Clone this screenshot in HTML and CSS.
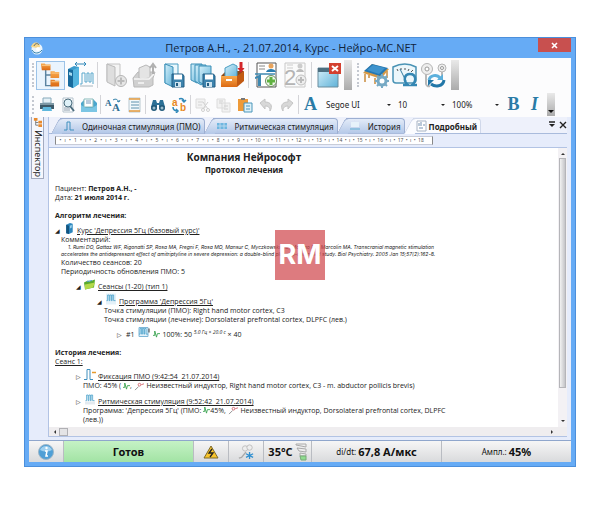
FILE: index.html
```html
<!DOCTYPE html>
<html lang="ru">
<head>
  <meta charset="UTF-8" />
  <meta name="viewport" content="width=device-width, initial-scale=1.0"/>
  <title>Нейро-МС.NET</title>
  <link rel="stylesheet" href="styles.css">
</head>
<body>

  <!-- shared symbols -->
  <svg class="defs" aria-hidden="true">
    <defs>
      <linearGradient id="blueBox" x1="0" x2="1" y1="0" y2="1">
        <stop offset="0" stop-color="#d6f0fa"/><stop offset="1" stop-color="#5fb2d8"/>
      </linearGradient>
      <linearGradient id="orangeBox" x1="0" x2="0" y1="0" y2="1">
        <stop offset="0" stop-color="#f9a94b"/><stop offset="1" stop-color="#dc6a14"/>
      </linearGradient>
    </defs>
    <symbol id="floppy" viewBox="0 0 14 15">
      <path d="M1 1h10.500l1.500 2v11H1z" fill="#3d83ad" stroke="#235d83"/>
      <path d="M3 1.500h8v5H3z" fill="#fff"/>
      <path d="M4 9h6v5H4z" fill="#cfe4ef"/>
      <path d="M5 10h2v3H5z" fill="#235d83"/>
    </symbol>
    <symbol id="pulses" viewBox="0 0 12 12">
      <path d="M0 9.500h1.500V2h2v7.500h1V2h2v7.500h1V2h2v7.500H12" fill="none" stroke="#3f9cc8"/>
    </symbol>
    <symbol id="zig" viewBox="0 0 8 10">
      <path d="M0 6h2V1l2 7 1-4h3" fill="none" stroke="#35a04c"/>
    </symbol>
    <symbol id="coil" viewBox="0 0 12 10">
      <path d="M1 9l4-4" stroke="#888"/>
      <circle cx="6" cy="3" r="1.500" fill="none" stroke="#d2636b"/>
      <path d="M8 3l3-1" stroke="#d2636b"/>
    </symbol>
  </svg>

  <main class="window">
    <header class="titlebar">
      <svg class="app-icon" viewBox="0 0 14 14">
        <circle cx="7" cy="8" r="5.500" fill="#eaf4fb"/>
        <path d="M1 6C2 2 6 0 9 3c2 2 1 4-2 4-2 0-3-1-6-1z" fill="#f5d68a"/>
        <path d="M4 5c1-3 4-3 5-1" stroke="#5b6b70" fill="none"/>
        <path d="M2 9c2 4 7 4 10 0" stroke="#2d7fae" fill="none"/>
        <circle cx="8" cy="8" r="2" fill="#fff"/>
      </svg>
      <h1 class="title">Петров А.Н., -, 21.07.2014, Курс - Нейро-МС.NET</h1>
      <button class="close" aria-label="Закрыть">
        <svg viewBox="0 0 7 7"><path d="M1 1l5 5M6 1L1 6" stroke="#fff" stroke-width="1.600"/></svg>
      </button>
    </header>

    <div class="client">
      <div class="toolbar large">
        <span class="grip"></span>
        <button class="tool active" aria-label="Дерево">
          <svg viewBox="0 0 28 28">
            <path d="M9 8v17h7M9 14h7" fill="none" stroke="#5b83a0" stroke-width="1.500"/>
            <path d="M4 2h4l1 1h5v6H5z" fill="url(#orangeBox)"/>
            <path d="M14 10h4l1 1h4v6h-9zM14 19h4l1 1h4v6h-9z" fill="url(#orangeBox)"/>
            <path d="M5 4h9M15 12h8M15 21h8" stroke="#fccb8a"/>
          </svg>
        </button>
        <button class="tool" aria-label="Стимулятор">
          <svg viewBox="0 0 28 28">
            <path d="M2 8l6-3 5 1v17l-6 4-5-2z" fill="#3b9bcc"/>
            <path d="M2 8l5 1v18l-5-2z" fill="#186a9c"/>
            <path d="M7 9l6-3v17l-6 4z" fill="#54b5df"/>
            <path d="M3 11l3 1v3l-3-1z" fill="#a9dcf0"/>
            <path d="M9 3h11M11 1L9 3l2 2M18 1l2 2-2 2" fill="none" stroke="#2f87b8"/>
            <path d="M14 23h2V12h3v9h2v-9h2v9h2v-9h2v11" fill="none" stroke="#5aa8cc"/>
            <path d="M14 25h13" stroke="#a8b6be"/>
          </svg>
        </button>
        <span class="sep"></span>
        <button class="tool" aria-label="Новый" disabled>
          <svg viewBox="0 0 28 28">
            <path d="M5 3h13v17H5z" fill="#f4f4f4" stroke="#c4c4c4"/>
            <path d="M5 3l8 3v19l-8-4z" fill="#dedede" stroke="#bbb"/>
            <circle cx="19" cy="20" r="5.500" fill="#e6e6e6" stroke="#b5b5b5"/>
            <path d="M19 16.500v7M15.500 20h7" stroke="#bbb" stroke-width="2"/>
          </svg>
        </button>
        <button class="tool" aria-label="Извлечь" disabled>
          <svg viewBox="0 0 28 28">
            <path d="M2 17l5-6h17l-2 6v7l-4 2H3z" fill="#d0d0d0" stroke="#b8b8b8"/>
            <path d="M8 7l7-3 4 2v11l-8 1-3-1z" fill="#e4e4e4" stroke="#b8b8b8"/>
            <path d="M3 18h15l5-5M7 22h6" stroke="#f6f6f6" fill="none" stroke-width="1.500"/>
            <path d="M22 13V5M19 7l3-4 3 4" stroke="#b0b0b0" stroke-width="2" fill="none"/>
          </svg>
        </button>
        <button class="tool" aria-label="Сохранить">
          <svg viewBox="0 0 28 28">
            <path d="M5 3h13v19H5z" fill="#eaf7fc" stroke="#4a9dc2"/>
            <path d="M5 3l8 3v20l-8-4z" fill="url(#blueBox)" stroke="#3b8fb7"/>
            <use href="#floppy" x="11" y="12" width="14" height="15"/>
          </svg>
        </button>
        <button class="tool" aria-label="Сохранить все">
          <svg viewBox="0 0 28 28">
            <path d="M2 3h11v16l-5 3-6-3z" fill="url(#blueBox)" stroke="#3b8fb7"/>
            <path d="M6 4h11v17l-5 3-6-4z" fill="url(#blueBox)" stroke="#3b8fb7"/>
            <path d="M10 5h12v19H16l-6-3z" fill="url(#blueBox)" stroke="#3b8fb7"/>
            <use href="#floppy" x="13" y="12" width="14" height="15"/>
          </svg>
        </button>
        <button class="tool" aria-label="В архив">
          <svg viewBox="0 0 28 28">
            <path d="M3 15l5-5h18l-4 5z" fill="#8f4a16"/>
            <path d="M7 7l8-4 4 2v12H7z" fill="url(#blueBox)" stroke="#4a9dc2"/>
            <path d="M3 15h16v11H3z" fill="url(#orangeBox)"/>
            <path d="M19 15l7-5v10l-7 6z" fill="#c25a12"/>
            <path d="M8 19h6" stroke="#fff" stroke-width="2"/>
            <path d="M23 1v7" stroke="#d3262b" stroke-width="3"/>
            <path d="M19.500 7h7L23 12z" fill="#d3262b"/>
          </svg>
        </button>
        <span class="sep short"></span>
        <button class="tool" aria-label="Протокол 1">
          <svg viewBox="0 0 28 28">
            <path d="M5 2h19v24H5z" fill="#fff" stroke="#555"/>
            <path d="M7 5h6M7 8h6" stroke="#888"/>
            <circle cx="19" cy="5" r="2.500" fill="#e9a45c"/><path d="M14 11c1-4 9-4 10 0z" fill="#2b7db0"/>
            <path d="M3 16l6-3v12H6v-8l-3 1z" fill="#3e88b0"/>
            <path d="M3 13h20" stroke="#3e88b0" stroke-width="1.500"/>
            <circle cx="19" cy="20" r="5.500" fill="#eef7ea" stroke="#6c8d60"/>
            <path d="M19 16v8M15 20h8" stroke="#5fb13f" stroke-width="3"/>
          </svg>
        </button>
        <button class="tool" aria-label="Протокол 2" disabled>
          <svg viewBox="0 0 28 28">
            <path d="M4 2h20v24H4z" fill="#fafafa" stroke="#c8c8c8"/>
            <path d="M6 4h6M6 7h6" stroke="#ccc"/>
            <circle cx="19" cy="5" r="2.500" fill="#ccc"/><path d="M15 11c1-4 7-4 8 0z" fill="#bbb"/>
            <text class="digit" x="3" y="24">2</text>
            <circle cx="20" cy="19" r="5" fill="#eee" stroke="#c0c0c0"/>
            <path d="M20 16v6M17 19h6" stroke="#bbb" stroke-width="2"/>
          </svg>
        </button>
        <span class="sep short"></span>
        <button class="tool" aria-label="Закрыть окно">
          <svg viewBox="0 0 28 28">
            <path d="M3 7h20v19H3z" fill="url(#blueBox)" stroke="#6a8d9e"/>
            <path d="M3 7h20v4H3z" fill="#4d6f80"/>
            <path d="M14 2h12v11H14z" fill="#d3402f"/>
            <path d="M17 5l6 5M23 5l-6 5" stroke="#fff" stroke-width="2"/>
          </svg>
        </button>
        <span class="overflow"></span>
        <span class="grip second"></span>
        <button class="tool" aria-label="Кушетка">
          <svg viewBox="0 0 28 28">
            <path d="M3 13v8M7 14v3M25 10v7M13 17v6" stroke="#c98b3c" stroke-width="1.500"/>
            <path d="M1 12l9-9 17 5-8 10z" fill="#d79a47"/>
            <path d="M2 10l8-7 16 4-8 8z" fill="#2478b4"/>
            <path d="M5 9l12 4 6-6-12-3z" fill="#3e93cd"/>
            <circle cx="20" cy="20" r="4" fill="#fff" stroke="#76a9c4" stroke-width="3"/>
            <path d="M20 13v3M20 24v3M13 20h3M24 20h3M15 15l2 2M23 23l2 2M25 15l-2 2M17 23l-2 2" stroke="#76a9c4" stroke-width="2"/>
          </svg>
        </button>
        <button class="tool" aria-label="Импеданс">
          <svg viewBox="0 0 28 28">
            <path d="M2 6q12-6 23 0v13q0 3-3 3H5q-3 0-3-3z" fill="#edf7fb" stroke="#4a93b5" stroke-width="1.500"/>
            <path d="M6 8l1 2M10 7v2M14 7v2M18 8l-1 2M22 9l-2 2" stroke="#555"/>
            <path d="M9 8l6 12" stroke="#357da1"/>
            <path d="M12 24h5c-5-4-4-11 2-11s7 7 2 11h5" fill="none" stroke="#3487b3" stroke-width="2.500"/>
          </svg>
        </button>
        <button class="tool" aria-label="Сменить индуктор">
          <svg viewBox="0 0 28 28">
            <path d="M6 13v10q1 3 4 2M22 11v6" stroke="#b8b8b8" fill="none" stroke-width="2"/>
            <circle cx="7" cy="8" r="5.500" fill="#eee" stroke="#b5b5b5"/><circle cx="7" cy="8" r="2" fill="#fff" stroke="#999"/>
            <circle cx="22" cy="7" r="4" fill="#eee" stroke="#b5b5b5"/><circle cx="22" cy="7" r="1.500" fill="#fff" stroke="#999"/>
            <path d="M9 19c1-5 8-6 11-2" fill="none" stroke="#5db0dc" stroke-width="3"/><path d="M23 13v6h-6z" fill="#5db0dc"/>
            <path d="M24 19c-1 7-9 7-13 4" fill="none" stroke="#2277a8" stroke-width="3"/><path d="M8 25v-6h6z" fill="#2277a8"/>
          </svg>
        </button>
        <span class="overflow last"></span>
      </div>

      <div class="toolbar small">
        <span class="grip"></span>
        <button class="tool" aria-label="Печать">
          <svg viewBox="0 0 16 16">
            <path d="M4 1h8v5H4z" fill="#e5f1f7" stroke="#8ab"/>
            <path d="M1 6h14v6H1z" fill="#3c5968"/><path d="M1 6h14v2H1z" fill="#7d98a5"/>
            <path d="M4 10h8l1 4H3z" fill="#5fb8dd"/>
          </svg>
        </button>
        <button class="tool" aria-label="Просмотр">
          <svg viewBox="0 0 16 16">
            <path d="M3 1h10v14H3z" fill="#fff" stroke="#b4c2cc"/>
            <path d="M4 11h6M4 13h6" stroke="#89a"/>
            <circle cx="8" cy="6" r="4" fill="#dff1f8" stroke="#4b6c7d"/><path d="M10 9l4 5" stroke="#4b6c7d" stroke-width="2"/>
          </svg>
        </button>
        <button class="tool" aria-label="Отправить">
          <svg viewBox="0 0 16 16">
            <path d="M0 6l4-4h8l4 4v9H0z" fill="#4ba6ce"/>
            <path d="M3 2h9v8H3z" fill="#fff" stroke="#8bb"/><path d="M5 4h5M5 6h5" stroke="#79b"/>
            <path d="M0 8l5 3h6l5-3v7H0z" fill="#7cc6e4"/>
          </svg>
        </button>
        <span class="sep"></span>
        <button class="tool" aria-label="Шрифт">
          <svg viewBox="0 0 16 16">
            <text class="letter" x="0" y="9">A</text><text class="letter big" x="7" y="14">A</text>
            <path d="M8 3c3-2 5 0 6 2M12 4l2 1 1-2" fill="none" stroke="#2f7fa8"/>
          </svg>
        </button>
        <button class="tool" aria-label="Абзац">
          <svg viewBox="0 0 16 16">
            <path d="M3 1h11v14H3z" fill="#f3f9fc" stroke="#b8c8d0"/>
            <path d="M3 2h11M3 14h11" stroke="#e69a3d" stroke-width="1.500"/>
            <path d="M5 5h8M5 8h8M5 11h8" stroke="#5e92ae"/>
          </svg>
        </button>
        <span class="sep"></span>
        <button class="tool" aria-label="Найти">
          <svg viewBox="0 0 16 16">
            <path d="M3 3h3l1 3h2l1-3h3l2 7H9V8H7v2H1z" fill="#2c7096"/>
            <circle cx="4" cy="11" r="3" fill="#1f5879"/><circle cx="12" cy="11" r="3" fill="#1f5879"/>
            <circle cx="4" cy="11" r="1.500" fill="#9bc"/><circle cx="12" cy="11" r="1.500" fill="#9bc"/>
          </svg>
        </button>
        <button class="tool" aria-label="Заменить">
          <svg viewBox="0 0 16 16">
            <text class="swap" x="1" y="9">a</text><text class="swap" x="9" y="14">b</text>
            <path d="M8 2c3-1 5 0 5 3M11 3l2 2 2-2M2 10c0 3 2 4 5 4M5 12l2 2-2 2" fill="none" stroke="#2f88b8" stroke-width="1.500"/>
          </svg>
        </button>
        <span class="sep"></span>
        <button class="tool" aria-label="Вырезать" disabled>
          <svg viewBox="0 0 16 16">
            <path d="M1 2h9v9H1z" fill="#f2f2f2" stroke="#dcdcdc"/><path d="M3 5h5M3 8h4" stroke="#d4d4d4"/>
            <path d="M8 5l5 7M13 5l-5 7" stroke="#d0d0d0"/><circle cx="8" cy="13" r="1.500" fill="none" stroke="#d0d0d0"/><circle cx="13" cy="13" r="1.500" fill="none" stroke="#d0d0d0"/>
          </svg>
        </button>
        <button class="tool" aria-label="Копировать" disabled>
          <svg viewBox="0 0 16 16">
            <path d="M1 2h8v9H1zM6 6h8v9H6z" fill="#f2f2f2" stroke="#dcdcdc"/>
            <path d="M3 4h4M3 6h3M8 9h4M8 12h4" stroke="#d0d0d0"/>
          </svg>
        </button>
        <button class="tool" aria-label="Вставить">
          <svg viewBox="0 0 16 16">
            <path d="M1 2h10v12H1z" fill="#ee9a38"/><path d="M4 1h4v2H4z" fill="#777"/>
            <path d="M7 6h8v9H7z" fill="#dff1f8" stroke="#4a96bb"/><path d="M9 9h4M9 12h4" stroke="#4a96bb"/>
          </svg>
        </button>
        <button class="tool" aria-label="Отменить" disabled>
          <svg viewBox="0 0 16 16"><path d="M2 6l5-4v3c6 0 8 4 5 9 0-4-2-5-5-5v3z" fill="#d8d8d8" stroke="#c4c4c4"/></svg>
        </button>
        <button class="tool" aria-label="Повторить" disabled>
          <svg viewBox="0 0 16 16"><path d="M14 6L9 2v3C3 5 1 9 4 14c0-4 2-5 5-5v3z" fill="#d8d8d8" stroke="#c4c4c4"/></svg>
        </button>
        <span class="sep"></span>
        <button class="tool style-btn">A</button>
        <label class="combo font-name">
          <select aria-label="Шрифт"><option>Segoe UI</option></select>
        </label>
        <label class="combo">
          <select aria-label="Размер"><option>10</option></select>
        </label>
        <label class="combo">
          <select aria-label="Масштаб"><option>100%</option></select>
        </label>
        <button class="tool style-btn">B</button>
        <button class="tool style-btn italic">I</button>
        <span class="overflow marked"></span>
      </div>

      <div class="workspace">
        <aside class="side">
          <button class="side-tab">
            <svg viewBox="0 0 10 10">
              <path d="M3 2v6h3M3 5h3" stroke="#777" fill="none"/>
              <path d="M1 0h4v3H1zM6 3h4v3H6zM6 7h4v3H6z" fill="#e98a2c"/>
            </svg>
            Инспектор
          </button>
        </aside>

        <section class="pane">
          <nav class="tabs">
            <button class="tab">
              <svg viewBox="0 0 12 12"><path d="M1 10h3V2h3v8h4" fill="none" stroke="#3f8fbe"/></svg>
              Одиночная стимуляция (ПМО)
            </button>
            <button class="tab">
              <svg viewBox="0 0 12 12"><path d="M1 3h10v6H1z" fill="#6fb6e0"/><path d="M1 6h10M4 3v6M8 3v6" stroke="#b8d8ee"/></svg>
              Ритмическая стимуляция
            </button>
            <button class="tab">
              <svg viewBox="0 0 12 12"><path d="M2 2h8v5H2z" fill="#e6f2fa"/><path d="M1 8h10v2H1z" fill="#8fc0df"/></svg>
              История
            </button>
            <button class="tab current">
              <svg viewBox="0 0 12 12"><path d="M1 1h9v10H1z" fill="#fff" stroke="#a8b4c4"/><path d="M3 3v3M5 2v4M7 5h2M3 8h4" stroke="#7793b3"/></svg>
              Подробный
            </button>
            <span class="tab-tools">
              <button class="mini" aria-label="Список">
                <svg viewBox="0 0 8 8"><path d="M1 1h6" stroke="#222" stroke-width="1.500"/><path d="M1 3h6L4 6z" fill="#222"/></svg>
              </button>
              <button class="mini" aria-label="Закрыть вкладку">
                <svg viewBox="0 0 8 8"><path d="M1 1l6 6M7 1L1 7" stroke="#222" stroke-width="1.400"/></svg>
              </button>
            </span>
          </nav>

          <div class="ruler-row">
            <div class="ruler" id="ruler"></div>
          </div>

          <div class="doc-row">
            <article class="doc">
              <div class="page">
                <h2>Компания Нейрософт</h2>
                <h3>Протокол лечения</h3>

                <p>Пациент: <b>Петров А.Н., -</b></p>
                <p>Дата: <b>21 июля 2014 г.</b></p>

                <h4>Алгоритм лечения:</h4>
                <div class="node">
                  <span class="mark">◢</span>
                  <svg class="node-icon" viewBox="0 0 12 14"><path d="M3 3l4-2 3 1v9l-4 2-3-1z" fill="#2c86bd"/><path d="M3 3l3 1v9l-3-1z" fill="#13547f"/><path d="M7 4l2-1v3l-2 1z" fill="#9bd0ea"/></svg>
                  <a href="#">Курс 'Депрессия 5Гц (базовый курс)'</a>
                </div>
                <div class="level1">
                  <p>Комментарий:</p>
                  <p class="cite">1. Rumi DO, Gattaz WF, Rigonatti SP, Rosa MA, Fregni F, Rosa MO, Mansur C, Myczkowski ML, Moreno RA, Marcolin MA. Transcranial magnetic stimulation<br>accelerates the antidepressant effect of amitriptyline in severe depression: a double-blind placebo-controlled study. Biol Psychiatry. 2005 Jan 15;57(2):162-8.</p>
                  <p>Количество сеансов: 20</p>
                  <p>Периодичность обновления ПМО: 5</p>
                </div>
                <div class="node level2">
                  <span class="mark">◢</span>
                  <svg class="node-icon" viewBox="0 0 12 12"><path d="M0 4l4-2 1 1 6-2-1 8-9 2z" fill="#58a92f"/><path d="M1 6l10-2-2 5-8 2z" fill="#b3d94a"/><path d="M3 3l5-1" stroke="#4f9ed0"/></svg>
                  <a href="#">Сеансы (1-20) (тип 1)</a>
                </div>
                <div class="node level3">
                  <span class="mark">◢</span>
                  <svg class="node-icon" viewBox="0 0 12 12"><path d="M1 0h10v11H1z" fill="#e3f1f9"/><use href="#pulses" width="12" height="9"/></svg>
                  <a href="#">Программа 'Депрессия 5Гц'</a>
                </div>
                <div class="points">
                  <p>Точка стимуляции (ПМО): Right hand motor cortex, C3</p>
                  <p>Точка стимуляции (лечение): Dorsolateral prefrontal cortex, DLPFC (лев.)</p>
                </div>
                <div class="node level4">
                  <span class="mark">▷</span>#1
                  <svg class="node-icon" viewBox="0 0 12 12"><path d="M1 1h9v9H1z" fill="#e3f1f9" stroke="#7fb6d6"/><use href="#pulses" x="1" width="9" height="10"/><path d="M11 2v4" stroke="#333"/></svg>
                  <svg class="inline-icon" viewBox="0 0 8 10"><use href="#zig"/></svg>
                  <span>100%: 50 <sup>5.0 Гц × 20.0 с</sup> × 40</span>
                </div>

                <h4>История лечения:</h4>
                <p><a href="#">Сеанс 1:</a></p>
                <div class="node event">
                  <span class="mark">▷</span>
                  <svg class="node-icon" viewBox="0 0 12 12"><path d="M0 11h3V1h3v10h3" fill="none" stroke="#3f8fbe"/><path d="M8 4h4" stroke="#e69a2d" stroke-width="1.500"/></svg>
                  <a href="#">Фиксация ПМО (9:42:54&nbsp; 21.07.2014)</a>
                </div>
                <p class="event-text">ПМО: 45% ( <svg class="inline-icon" viewBox="0 0 8 10"><use href="#zig"/></svg>, <svg class="inline-icon coil" viewBox="0 0 12 10"><use href="#coil"/></svg> Неизвестный индуктор, Right hand motor cortex, C3 - m. abductor pollicis brevis)</p>
                <div class="node event">
                  <span class="mark">▷</span>
                  <svg class="node-icon" viewBox="0 0 12 12"><path d="M1 8h10v3H1z" fill="#e3eaf0"/><use href="#pulses" width="12" height="9"/></svg>
                  <a href="#">Ритмическая стимуляция (9:52:42&nbsp; 21.07.2014)</a>
                </div>
                <p class="event-text">Программа: 'Депрессия 5Гц' (ПМО: <svg class="inline-icon" viewBox="0 0 8 10"><use href="#zig"/></svg>45%, <svg class="inline-icon coil" viewBox="0 0 12 10"><use href="#coil"/></svg> Неизвестный индуктор, Dorsolateral prefrontal cortex, DLPFC<br>(лев.))</p>
              </div>
            </article>
            <div class="vscroll"><span class="arrow up"></span><span class="vthumb"></span><span class="arrow down"></span></div>
          </div>
          <div class="hscroll"><span class="arrow left"></span><span class="hthumb"></span><span class="arrow right"></span></div>
        </section>
      </div>

      <footer class="status">
        <div class="cell info">
          <svg viewBox="0 0 16 16"><circle cx="8" cy="8" r="7.500" fill="#4f9fd6" stroke="#9cb6c8"/><path d="M2 6a6.500 6.500 0 0 1 12 0q-6 3-12 0z" fill="#9fd0ef"/><circle cx="8.500" cy="4" r="1.200" fill="#fff"/><path d="M7 7h2l-1 5h2" fill="none" stroke="#fff" stroke-width="1.500"/></svg>
        </div>
        <div class="cell wide ready">Готов</div>
        <div class="cell">
          <svg viewBox="0 0 16 16"><path d="M8 2l7 12H1z" fill="#f9c52b" stroke="#7d6a2a" stroke-linejoin="round"/><path d="M9 5l-3 4h4l-3 4" fill="none" stroke="#222" stroke-width="1.300"/></svg>
        </div>
        <div class="cell">
          <svg viewBox="0 0 18 18"><path d="M1 16l3-1 5-6" fill="none" stroke="#aaa" stroke-width="1.500"/><circle cx="8" cy="5" r="3" fill="#eee" stroke="#bbb"/><circle cx="13" cy="4" r="3" fill="#eee" stroke="#bbb"/><path d="M13 9v8M9 11l8 4M17 11l-8 4" stroke="#2f8fd0" stroke-width="1.500"/></svg>
        </div>
        <div class="cell temp">35°C
          <svg viewBox="0 0 12 18"><path d="M1 1h10v3l-10-2zM2 5l9 1v3L4 8zM5 10l6 1v2H5z" fill="#eee" stroke="#aaa"/><path d="M5 13h6v4H6z" fill="#8fdc8f" stroke="#7a7"/></svg>
        </div>
        <div class="cell wide"><span>di/dt:</span>67,8 А/мкс</div>
        <div class="cell wide"><span>Ампл.:</span>45%</div>
      </footer>
    </div>

    <div class="badge">RM</div>
  </main>

  <script>
    const ruler = document.getElementById('ruler');
    for (let i = 1; i <= 18; i++) {
      const cell = document.createElement('span');
      cell.className = 'cm';
      cell.innerHTML = `<i>•</i><i>ı</i><i>•</i><i>${i}</i>`;
      ruler.appendChild(cell);
    }
  </script>

</body>
</html>
```

FILE: styles.css
```css
* {
  margin: 0;
  padding: 0;
  box-sizing: border-box;
}

body {
  font-family: 'Noto Sans', 'Open Sans', sans-serif;
  background: #fff;
  color: #222;
  padding: 37px 24px;
}

button {
  font: inherit;
  color: inherit;
  border: none;
  background: none;
}

svg {
  display: block;
}

.defs {
  position: absolute;
  width: 0;
  height: 0;
}

.window {
  position: relative;
  background: #66abf5;
  border: 1px solid #4c8fdb;
  padding: 0 4px 4px;
}

/* title bar */
.titlebar {
  display: flex;
  align-items: flex-start;
  height: 20px;
}

.app-icon {
  width: 14px;
  height: 14px;
  margin: 3px 0 0 1px;
}

.title {
  flex: 1;
  text-align: center;
  font: 11px 'Open Sans', sans-serif;
  line-height: 20px;
  color: #10243c;
}

.close {
  width: 33px;
  height: 14px;
  display: flex;
  align-items: center;
  justify-content: center;
  background: #c8504f;
}

.close svg {
  width: 7px;
  height: 7px;
}

.client {
  background: #e6ecfb;
}

/* toolbars */
.toolbar {
  display: flex;
  align-items: center;
  padding-left: 3px;
  background: #fcfcfd;
}

.toolbar.large {
  height: 34px;
}

.toolbar.small {
  height: 25px;
}

.grip {
  width: 4px;
  height: 24px;
  border-left: 2px dotted #c4c8d0;
}

.small .grip {
  height: 18px;
}

.grip.second {
  margin-left: 5px;
}

.tool {
  display: flex;
  align-items: center;
  justify-content: center;
  width: 29px;
  height: 29px;
}

.small .tool {
  width: 21px;
  height: 21px;
}

.large .tool svg {
  width: 28px;
  height: 28px;
}

.small .tool svg {
  width: 16px;
  height: 16px;
}

.tool.active {
  border: 1px solid #9cc3e8;
  background: #eaf4fd;
}

.sep {
  width: 1px;
  height: 26px;
  margin: 0 3px;
  background: #d4d4d8;
}

.sep.short {
  margin: 0 2px;
}

.small .sep {
  height: 19px;
  margin: 0 1px;
}

.overflow {
  width: 8px;
  height: 30px;
  margin-left: 1px;
  background: linear-gradient(#e9e9e9, #ababab);
}

.overflow.last {
  margin-left: 3px;
}

.small .overflow {
  height: 23px;
  margin-left: 2px;
}

.overflow.marked {
  display: flex;
  align-items: flex-end;
  justify-content: center;
  padding-bottom: 3px;
}

.overflow.marked::after {
  content: "";
  border: 3px solid transparent;
  border-top-color: #111;
  border-bottom: none;
}

.digit {
  font: 22px 'Liberation Sans', sans-serif;
  fill: #b4b4b4;
}

.letter {
  font: bold 9px 'Liberation Serif', serif;
  fill: #2f6f94;
}

.letter.big {
  font-size: 11px;
}

.swap {
  font: bold 10px 'Liberation Sans', sans-serif;
  fill: #e8891f;
}

.style-btn {
  font: bold 18px 'Liberation Serif', serif;
  color: #2a7ba6;
}

.style-btn.italic {
  font-style: italic;
}

.combo {
  display: flex;
  align-items: center;
  width: 54px;
  padding-right: 4px;
}

.combo.font-name {
  width: 72px;
  margin-left: 2px;
}

.combo select {
  flex: 1;
  min-width: 0;
  padding-left: 3px;
  border: none;
  appearance: none;
  background: none;
  font: 8px 'Noto Sans', sans-serif;
  color: #222;
}

.combo::after {
  content: "";
  border: 2px solid transparent;
  border-top-color: #222;
  border-bottom: none;
}

/* workspace */
.workspace {
  display: flex;
  padding: 0 4px 3px 2px;
}

.side {
  width: 17px;
}

.side-tab {
  display: flex;
  align-items: center;
  gap: 3px;
  width: 13px;
  padding: 1px 0;
  writing-mode: vertical-rl;
  font-size: 9px;
  line-height: 12px;
  border: 1px solid #a3abc0;
  border-top: none;
  background: #f5f7fd;
}

.side-tab svg {
  width: 9px;
  height: 9px;
}

.pane {
  flex: 1;
  min-width: 0;
  border-left: 1px solid #b2c3e4;
  border-bottom: 1px solid #b2c3e4;
}

.tabs {
  display: flex;
  align-items: flex-end;
  height: 17px;
  padding-left: 11px;
  gap: 8px;
  border-bottom: 1px solid #a9bbdc;
  background: #eef1fb;
}

.tab {
  position: relative;
  display: flex;
  align-items: center;
  gap: 7px;
  height: 15px;
  padding: 0 3px;
  font-size: 8px;
  white-space: nowrap;
  border: 1px solid #9dafd2;
  border-left: none;
  border-bottom: none;
  border-radius: 0 4px 0 0;
  background: linear-gradient(#e3ebf8, #b4c8e8);
}

/* slanted left edge */
.tab::before {
  content: "";
  position: absolute;
  left: -5px;
  top: -1px;
  width: 10px;
  height: 15px;
  transform: skewX(-28deg);
  border-left: 1px solid #9dafd2;
  border-top: 1px solid #9dafd2;
  border-radius: 4px 0 0 0;
  background: linear-gradient(#e3ebf8, #b4c8e8);
}

.tab svg {
  position: relative;
  width: 12px;
  height: 12px;
}

.tab.current {
  gap: 1px;
  font-weight: bold;
  border-color: #d0d8ea;
  background: #fbfcff;
}

.tab.current::before {
  border-color: #d0d8ea;
  background: #fbfcff;
}

.tab-tools {
  display: flex;
  gap: 3px;
  margin-left: auto;
  align-self: center;
}

.mini svg {
  width: 8px;
  height: 8px;
}

.ruler-row {
  padding: 2px 6px;
  background: #e6ecfb;
  border-bottom: 1px solid #b2c3e4;
}

.ruler {
  display: flex;
  max-width: 378px;
  height: 9px;
  padding: 0 7px 0 2px;
  border: 1px solid #c8ccd8;
  border-left-color: #888;
  border-right-color: #888;
  background: #fff;
}

.cm {
  flex: 1;
  display: flex;
  justify-content: space-around;
  font-size: 5px;
  line-height: 7px;
  color: #555;
}

.cm i {
  font-style: normal;
}

/* document */
.doc-row {
  display: flex;
  background: #fff;
}

.doc {
  flex: 1;
  min-width: 0;
  padding: 2px 6px 0;
}

.page {
  max-width: 378px;
  min-height: 277px;
  font: 7px 'Open Sans', sans-serif;
  line-height: 9px;
  white-space: nowrap;
}

.page h2 {
  font-size: 10px;
  line-height: 14px;
  text-align: center;
}

.page h3 {
  font-size: 8px;
  line-height: 11px;
  margin-bottom: 9px;
  text-align: center;
}

.page h4 {
  margin-top: 9px;
  font-size: 7px;
}

.page a {
  color: inherit;
}

.node {
  display: flex;
  align-items: flex-end;
  gap: 2px;
  height: 15px;
}

.mark {
  width: 6px;
  font: 6px 'DejaVu Sans', sans-serif;
  line-height: 8px;
}

.node-icon {
  width: 12px;
  height: 13px;
}

.inline-icon {
  display: inline-block;
  width: 7px;
  height: 9px;
  vertical-align: middle;
}

.inline-icon.coil {
  width: 11px;
}

.level1 {
  padding-left: 6px;
}

.cite {
  font: italic 5px 'Inter', sans-serif;
  line-height: 7px;
  text-indent: 7px;
}

.level2 {
  padding-left: 21px;
}

.level3 {
  padding-left: 42px;
}

.points {
  padding-left: 49px;
}

.level4 {
  gap: 3px;
  padding-left: 62px;
}

.page sup {
  font-size: 5px;
  line-height: 5px;
  font-style: italic;
}

.event {
  padding-left: 21px;
}

.event-text {
  padding-left: 28px;
}

/* scrollbars */
.vscroll {
  display: flex;
  flex-direction: column;
  align-items: center;
  width: 9px;
  background: #f3f1f4;
}

.vthumb {
  width: 7px;
  height: 230px;
  margin-bottom: auto;
  border: 1px solid #b5b5b9;
  background: linear-gradient(90deg, #f2f2f2, #c4c4c8);
}

.arrow {
  border: 2px solid transparent;
  margin: 3px;
}

.up {
  border-bottom-color: #333;
}

.down {
  border-top-color: #333;
}

.left {
  border-right-color: #333;
}

.right {
  border-left-color: #333;
  margin-left: auto;
  margin-right: 12px;
}

.hscroll {
  display: flex;
  align-items: center;
  height: 9px;
  background: #efedef;
}

.hthumb {
  width: 9px;
  height: 8px;
  border: 1px solid #b0b0b4;
  background: #e4e4e6;
}

/* status bar */
.status {
  display: flex;
  height: 22px;
  border-top: 1px solid #8fa6cc;
  background: linear-gradient(#f6f6f6, #d9dadc);
}

.cell {
  display: flex;
  align-items: center;
  justify-content: center;
  gap: 2px;
  width: 35px;
  border-right: 1px solid #b9bcc2;
  font-size: 11px;
  font-weight: bold;
  white-space: nowrap;
  color: #111;
}

.cell.wide {
  flex: 1;
}

.cell:last-child {
  border-right: none;
}

.cell svg {
  width: 16px;
  height: 16px;
}

.cell span {
  font-size: 8px;
  font-weight: normal;
}

.cell.ready {
  background: linear-gradient(#c5f2c5, #a2e3a4);
}

.cell.temp {
  width: 48px;
}

.cell.temp svg {
  width: 12px;
  height: 18px;
}

/* logo over the window */
.badge {
  position: absolute;
  left: 50%;
  top: 192px;
  width: 50px;
  height: 50px;
  margin-left: -25px;
  text-align: center;
  font: bold 27px 'Inter', sans-serif;
  line-height: 50px;
  color: #fff;
  background: rgba(208, 72, 78, 0.72);
}
```
